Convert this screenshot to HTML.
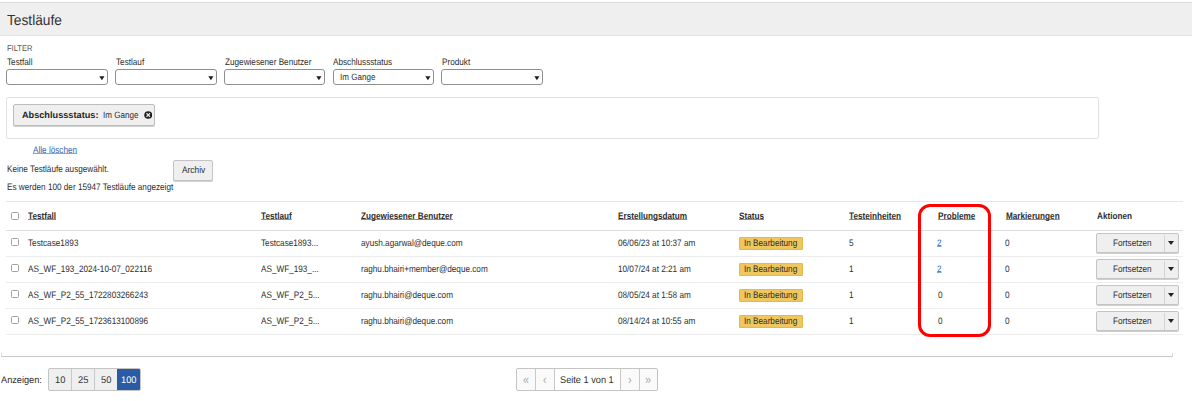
<!DOCTYPE html>
<html><head><meta charset="utf-8"><title>Testläufe</title>
<style>
html,body{margin:0;padding:0;background:#fff;}
body{width:1192px;height:401px;position:relative;overflow:hidden;font-family:"Liberation Sans",sans-serif;color:#2e2e2e;}
.t{text-rendering:geometricPrecision;position:absolute;line-height:1;white-space:nowrap;transform-origin:0 0;}
.b{font-weight:bold;}
.u{text-decoration:underline;text-underline-offset:0px;text-decoration-skip-ink:none;text-decoration-color:rgba(50,50,50,0.55);}
.lk{color:#3367b2;text-decoration:underline;text-underline-offset:0px;text-decoration-skip-ink:none;text-decoration-color:rgba(51,103,178,0.6);}
.abs{position:absolute;box-sizing:border-box;}
.hdr{position:absolute;left:0;top:2px;width:1192px;height:34px;background:#efefef;border-top:1px solid #dcdcdc;border-bottom:1px solid #e3e3e3;box-sizing:border-box;}
.sel{position:absolute;top:69px;width:101px;height:16px;border:1px solid #8f8f8f;border-radius:3px;box-sizing:border-box;background:#fff;}
.sel svg{position:absolute;right:2.4px;top:6px;}
.cb{position:absolute;left:11px;width:8px;height:8px;border:1px solid #a2a2a2;border-radius:1.5px;box-sizing:border-box;background:#fff;}
.hl{position:absolute;left:6px;width:1177px;height:1px;}
.badge{position:absolute;left:739px;width:64px;height:13px;background:#f0c75e;border:1px solid #e6b84a;border-radius:1px;box-sizing:border-box;}
.btn{position:absolute;left:1096px;width:83px;height:20px;background:#efefef;border:1px solid #c4c4c4;border-radius:2px;box-sizing:border-box;box-shadow:0 1px 0 #cfcfcf;}
.btn .sp{position:absolute;left:67px;top:1px;width:1px;height:17px;background:#d4d4d4;}
.btn i{position:absolute;left:70.8px;top:6.8px;width:0;height:0;border-left:3.2px solid transparent;border-right:3.2px solid transparent;border-top:4.6px solid #222;}
</style></head><body>
<div class="hdr"></div>
<div class="t " style="left:7px;top:14.0px;font-size:14.6px;transform:scale(0.9400,1.0000);color:#333;">Testläufe</div>
<div class="t " style="left:7px;top:44.0px;font-size:8.4px;transform:scale(0.9000,1.0000);color:#555;">FILTER</div>
<div class="t " style="left:7px;top:57.0px;font-size:9.4px;transform:scale(0.8723,1.0000);">Testfall</div>
<div class="t " style="left:115.5px;top:57.0px;font-size:9.4px;transform:scale(0.8723,1.0000);">Testlauf</div>
<div class="t " style="left:224.5px;top:57.0px;font-size:9.4px;transform:scale(0.8723,1.0000);">Zugewiesener Benutzer</div>
<div class="t " style="left:333.2px;top:57.0px;font-size:9.4px;transform:scale(0.8723,1.0000);">Abschlussstatus</div>
<div class="t " style="left:441.6px;top:57.0px;font-size:9.4px;transform:scale(0.8723,1.0000);">Produkt</div>
<div class="sel" style="left:6px;width:102px;"><svg width="6" height="5" viewBox="0 0 6 5"><path d="M0.3 0.2H5.5L2.9 4.2Z" fill="#1e1e1e"/></svg></div>
<div class="sel" style="left:115px;width:102px;"><svg width="6" height="5" viewBox="0 0 6 5"><path d="M0.3 0.2H5.5L2.9 4.2Z" fill="#1e1e1e"/></svg></div>
<div class="sel" style="left:224px;width:101px;"><svg width="6" height="5" viewBox="0 0 6 5"><path d="M0.3 0.2H5.5L2.9 4.2Z" fill="#1e1e1e"/></svg></div>
<div class="sel" style="left:333px;width:101px;"><svg width="6" height="5" viewBox="0 0 6 5"><path d="M0.3 0.2H5.5L2.9 4.2Z" fill="#1e1e1e"/></svg></div>
<div class="sel" style="left:441px;width:102px;"><svg width="6" height="5" viewBox="0 0 6 5"><path d="M0.3 0.2H5.5L2.9 4.2Z" fill="#1e1e1e"/></svg></div>
<div class="t " style="left:339.9px;top:73.0px;font-size:9.1px;transform:scale(0.8857,1.0000);">Im Gange</div>
<div class="abs" style="left:6px;top:97px;width:1093px;height:42px;border:1px solid #e2e2e2;border-radius:2px;"></div>
<div class="abs" style="left:13px;top:104px;width:142px;height:22px;background:#efefef;border:1px solid #bdbdbd;border-radius:2px;box-shadow:0 1px 0 #d0d0d0;"></div>
<div class="t b" style="left:21.9px;top:111.0px;font-size:9.2px;color:#1e1e1e;">Abschlussstatus:</div>
<div class="t " style="left:103.4px;top:111.0px;font-size:9.1px;transform:scale(0.8901,1.0000);">Im Gange</div>
<svg class="abs" style="left:143.5px;top:110.5px;" width="8.5" height="8" viewBox="0 0 8.5 8"><ellipse cx="4.25" cy="4" rx="4" ry="3.8" fill="#1e1e1e"/><path d="M2.5 2.3L6 5.7M6 2.3L2.5 5.7" stroke="#e8e8e8" stroke-width="1.3"/></svg>
<div class="t lk" style="left:33.2px;top:145.0px;font-size:9.4px;transform:scale(0.8723,1.0000);">Alle löschen</div>
<div class="t " style="left:6.8px;top:164.0px;font-size:9.4px;transform:scale(0.8723,1.0000);">Keine Testläufe ausgewählt.</div>
<div class="abs" style="left:173px;top:160px;width:40px;height:20.5px;background:#efefef;border:1px solid #c4c4c4;border-radius:2px;box-shadow:0 1px 0 #d0d0d0;"></div>
<div class="t " style="left:182.2px;top:166.0px;font-size:9.5px;transform:scale(0.8789,1.0000);">Archiv</div>
<div class="t " style="left:6.6px;top:182.0px;font-size:9.4px;transform:scale(0.8723,1.0000);">Es werden 100 der 15947 Testläufe angezeigt</div>
<div class="hl" style="top:201px;background:#e6e6e6;"></div>
<div class="hl" style="top:230px;background:#dedede;"></div>
<div class="hl" style="top:256px;background:#ededed;"></div>
<div class="hl" style="top:282px;background:#ededed;"></div>
<div class="hl" style="top:308px;background:#ededed;"></div>
<div class="hl" style="top:334px;background:#ededed;"></div>
<div class="cb" style="top:212px;"></div>
<div class="t b u" style="left:28px;top:211.0px;font-size:9.4px;transform:scale(0.8723,1.0000);">Testfall</div>
<div class="t b u" style="left:261px;top:211.0px;font-size:9.4px;transform:scale(0.8723,1.0000);">Testlauf</div>
<div class="t b u" style="left:361px;top:211.0px;font-size:9.4px;transform:scale(0.8723,1.0000);">Zugewiesener Benutzer</div>
<div class="t b u" style="left:618.3px;top:211.0px;font-size:9.4px;transform:scale(0.8723,1.0000);">Erstellungsdatum</div>
<div class="t b u" style="left:739.2px;top:211.0px;font-size:9.4px;transform:scale(0.8723,1.0000);">Status</div>
<div class="t b u" style="left:849px;top:211.0px;font-size:9.4px;transform:scale(0.8723,1.0000);">Testeinheiten</div>
<div class="t b u" style="left:937.5px;top:211.0px;font-size:9.4px;transform:scale(0.8723,1.0000);">Probleme</div>
<div class="t b u" style="left:1005.5px;top:211.0px;font-size:9.4px;transform:scale(0.8723,1.0000);">Markierungen</div>
<div class="t b" style="left:1096.5px;top:211.0px;font-size:9.4px;transform:scale(0.8723,1.0000);">Aktionen</div>
<div class="cb" style="top:238px;"></div>
<div class="t " style="left:28.4px;top:238.0px;font-size:9.4px;transform:scale(0.8723,1.0000);">Testcase1893</div>
<div class="t " style="left:260.9px;top:238.0px;font-size:9.4px;transform:scale(0.8723,1.0000);">Testcase1893...</div>
<div class="t " style="left:361px;top:238.0px;font-size:9.4px;transform:scale(0.8723,1.0000);">ayush.agarwal@deque.com</div>
<div class="t " style="left:618.3px;top:238.0px;font-size:9.4px;transform:scale(0.8723,1.0000);">06/06/23 at 10:37 am</div>
<div class="badge" style="top:237px;"></div>
<div class="t " style="left:744.3px;top:238.0px;font-size:9.4px;transform:scale(0.8723,1.0000);">In Bearbeitung</div>
<div class="t " style="left:849px;top:238.0px;font-size:9.4px;transform:scale(0.8723,1.0000);">5</div>
<div class="t lk" style="left:936.9px;top:238.0px;font-size:9.4px;transform:scale(0.8723,1.0000);">2</div>
<div class="t " style="left:1005.3px;top:238.0px;font-size:9.4px;transform:scale(0.8723,1.0000);">0</div>
<div class="btn" style="top:233px;"><div class="sp"></div><i></i></div>
<div class="t " style="left:1112.7px;top:238.0px;font-size:9.4px;transform:scale(0.8723,1.0000);">Fortsetzen</div>
<div class="cb" style="top:264px;"></div>
<div class="t " style="left:28.4px;top:264.0px;font-size:9.4px;transform:scale(0.8723,1.0000);">AS_WF_193_2024-10-07_022116</div>
<div class="t " style="left:260.9px;top:264.0px;font-size:9.4px;transform:scale(0.8723,1.0000);">AS_WF_193_...</div>
<div class="t " style="left:361px;top:264.0px;font-size:9.4px;transform:scale(0.8723,1.0000);">raghu.bhairi+member@deque.com</div>
<div class="t " style="left:618.3px;top:264.0px;font-size:9.4px;transform:scale(0.8723,1.0000);">10/07/24 at 2:21 am</div>
<div class="badge" style="top:263px;"></div>
<div class="t " style="left:744.3px;top:264.0px;font-size:9.4px;transform:scale(0.8723,1.0000);">In Bearbeitung</div>
<div class="t " style="left:849px;top:264.0px;font-size:9.4px;transform:scale(0.8723,1.0000);">1</div>
<div class="t lk" style="left:936.9px;top:264.0px;font-size:9.4px;transform:scale(0.8723,1.0000);">2</div>
<div class="t " style="left:1005.3px;top:264.0px;font-size:9.4px;transform:scale(0.8723,1.0000);">0</div>
<div class="btn" style="top:259px;"><div class="sp"></div><i></i></div>
<div class="t " style="left:1112.7px;top:264.0px;font-size:9.4px;transform:scale(0.8723,1.0000);">Fortsetzen</div>
<div class="cb" style="top:290px;"></div>
<div class="t " style="left:28.4px;top:290.0px;font-size:9.4px;transform:scale(0.8723,1.0000);">AS_WF_P2_55_1722803266243</div>
<div class="t " style="left:260.9px;top:290.0px;font-size:9.4px;transform:scale(0.8723,1.0000);">AS_WF_P2_5...</div>
<div class="t " style="left:361px;top:290.0px;font-size:9.4px;transform:scale(0.8723,1.0000);">raghu.bhairi@deque.com</div>
<div class="t " style="left:618.3px;top:290.0px;font-size:9.4px;transform:scale(0.8723,1.0000);">08/05/24 at 1:58 am</div>
<div class="badge" style="top:289px;"></div>
<div class="t " style="left:744.3px;top:290.0px;font-size:9.4px;transform:scale(0.8723,1.0000);">In Bearbeitung</div>
<div class="t " style="left:849px;top:290.0px;font-size:9.4px;transform:scale(0.8723,1.0000);">1</div>
<div class="t " style="left:937.8px;top:290.0px;font-size:9.4px;transform:scale(0.8723,1.0000);">0</div>
<div class="t " style="left:1005.3px;top:290.0px;font-size:9.4px;transform:scale(0.8723,1.0000);">0</div>
<div class="btn" style="top:285px;"><div class="sp"></div><i></i></div>
<div class="t " style="left:1112.7px;top:290.0px;font-size:9.4px;transform:scale(0.8723,1.0000);">Fortsetzen</div>
<div class="cb" style="top:316px;"></div>
<div class="t " style="left:28.4px;top:316.0px;font-size:9.4px;transform:scale(0.8723,1.0000);">AS_WF_P2_55_1723613100896</div>
<div class="t " style="left:260.9px;top:316.0px;font-size:9.4px;transform:scale(0.8723,1.0000);">AS_WF_P2_5...</div>
<div class="t " style="left:361px;top:316.0px;font-size:9.4px;transform:scale(0.8723,1.0000);">raghu.bhairi@deque.com</div>
<div class="t " style="left:618.3px;top:316.0px;font-size:9.4px;transform:scale(0.8723,1.0000);">08/14/24 at 10:55 am</div>
<div class="badge" style="top:315px;"></div>
<div class="t " style="left:744.3px;top:316.0px;font-size:9.4px;transform:scale(0.8723,1.0000);">In Bearbeitung</div>
<div class="t " style="left:849px;top:316.0px;font-size:9.4px;transform:scale(0.8723,1.0000);">1</div>
<div class="t " style="left:937.8px;top:316.0px;font-size:9.4px;transform:scale(0.8723,1.0000);">0</div>
<div class="t " style="left:1005.3px;top:316.0px;font-size:9.4px;transform:scale(0.8723,1.0000);">0</div>
<div class="btn" style="top:311px;"><div class="sp"></div><i></i></div>
<div class="t " style="left:1112.7px;top:316.0px;font-size:9.4px;transform:scale(0.8723,1.0000);">Fortsetzen</div>
<div class="abs" style="left:918px;top:204px;width:73px;height:133px;border:3px solid #f00;border-radius:12px;"></div>
<div class="abs" style="left:1px;top:353px;width:1172px;height:4px;border:1px solid #dadada;border-bottom-color:#c8c8c8;border-top:none;"></div>
<div class="t " style="left:1px;top:376.0px;font-size:9.6px;transform:scale(0.9583,1.0000);">Anzeigen:</div>
<div class="abs" style="left:48px;top:368px;width:92.5px;height:22.5px;border:1px solid #c4c4c4;border-radius:2px;background:#efefef;overflow:hidden;"><div class="abs" style="left:22px;top:0;width:1px;height:21px;background:#c8c8c8;"></div><div class="abs" style="left:45px;top:0;width:1px;height:21px;background:#c8c8c8;"></div><div class="abs" style="left:68px;top:0;width:24px;height:21px;background:#2a5ca6;"></div></div>
<div class="t " style="left:55px;top:376.0px;font-size:9.6px;transform:scale(0.9688,1.0000);color:#333;">10</div>
<div class="t " style="left:78px;top:376.0px;font-size:9.6px;transform:scale(0.9688,1.0000);color:#333;">25</div>
<div class="t " style="left:101px;top:376.0px;font-size:9.6px;transform:scale(0.9688,1.0000);color:#333;">50</div>
<div class="t " style="left:120.7px;top:376.0px;font-size:9.6px;transform:scale(0.9688,1.0000);color:#fff;">100</div>
<div class="abs" style="left:516px;top:368px;width:142px;height:23px;border:1px solid #c4c4c4;border-radius:2px;background:#fff;"><div class="abs" style="left:0;top:0;width:37px;height:21px;background:#fafafa;border-radius:2px 0 0 2px;"></div><div class="abs" style="left:103px;top:0;width:37px;height:21px;background:#fafafa;border-radius:0 2px 2px 0;"></div><div class="abs" style="left:18px;top:0;width:1px;height:21px;background:#c8c8c8;"></div><div class="abs" style="left:37px;top:0;width:1px;height:21px;background:#c8c8c8;"></div><div class="abs" style="left:103px;top:0;width:1px;height:21px;background:#c8c8c8;"></div><div class="abs" style="left:122px;top:0;width:1px;height:21px;background:#c8c8c8;"></div></div>
<div class="t " style="left:522.6px;top:373.0px;font-size:13.5px;transform:scale(0.8000,1.0000);color:#aaa;">«</div>
<div class="t " style="left:543px;top:373.0px;font-size:13.5px;transform:scale(0.8000,1.0000);color:#aaa;">‹</div>
<div class="t " style="left:560.3px;top:376.0px;font-size:9.8px;transform:scale(0.9388,1.0000);">Seite 1 von 1</div>
<div class="t " style="left:628.3px;top:373.0px;font-size:13.5px;transform:scale(0.8000,1.0000);color:#aaa;">›</div>
<div class="t " style="left:645px;top:373.0px;font-size:13.5px;transform:scale(0.8000,1.0000);color:#aaa;">»</div>
</body></html>
